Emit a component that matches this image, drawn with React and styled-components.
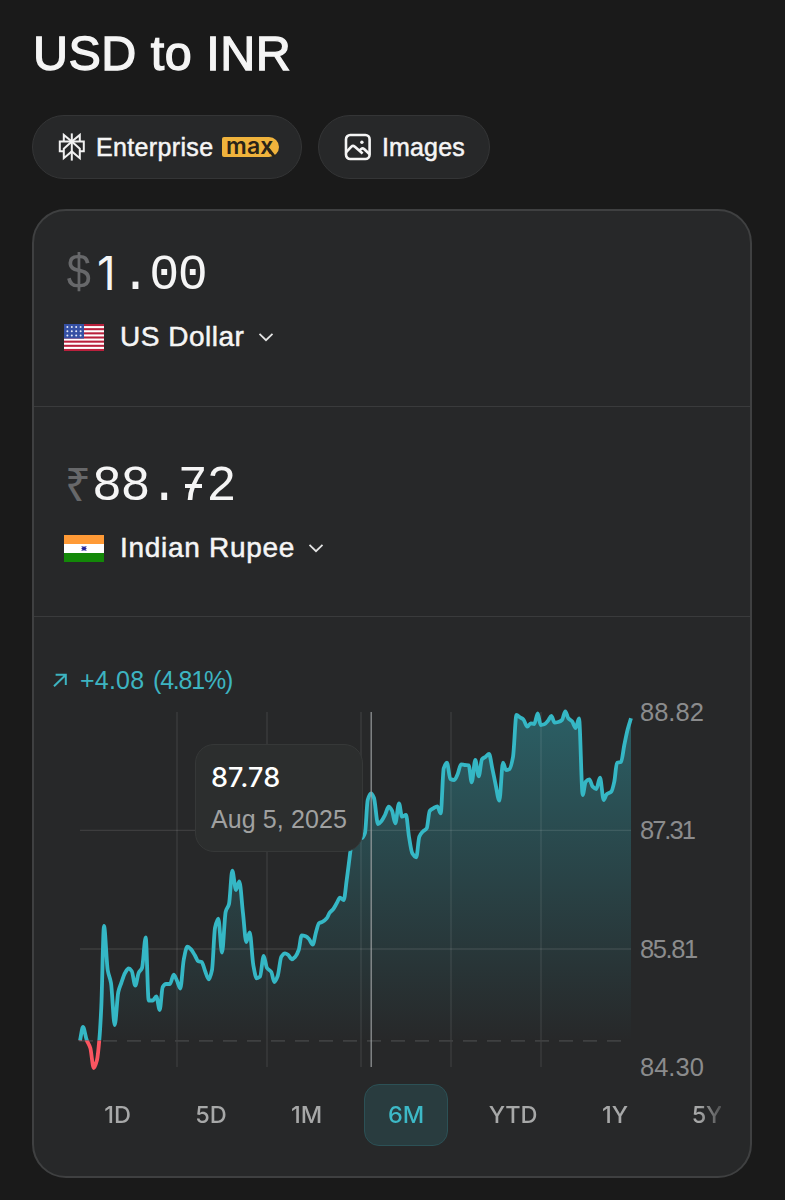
import React from 'react';
import styled, { createGlobalStyle } from 'styled-components';

const Global = createGlobalStyle`
  * { box-sizing: border-box; }
  body { margin: 0; background: #1a1a1a; }
`;

const Page = styled.main`
  height: 1200px;
  padding: 22px 33px 0 32px;
  overflow: hidden;
  background: #1a1a1a;
  color: #f5f5f5;
  font-family: Inter, "Liberation Sans", sans-serif;
`;
const Title = styled.h1`
  margin: 0 0 31px 1px;
  height: 62px;
  line-height: 62px;
  font-family: "Liberation Sans", sans-serif;
  font-size: 48.5px;
  font-weight: 400;
  letter-spacing: 0.5px;
  -webkit-text-stroke: 1.3px #f5f5f5;
  white-space: nowrap;
`;
const Chips = styled.div`
  display: flex;
  gap: 16px;
  margin-bottom: 30px;
`;
const Chip = styled.div`
  display: flex;
  align-items: center;
  width: ${(p) => p.$w}px;
  height: 64px;
  padding-left: 25px;
  border: 1.5px solid #343536;
  border-radius: 32px;
  background: #272829;
  font-size: 24px;
  font-weight: 500;
  white-space: nowrap;
  svg { flex: none; }
`;
const ChipLabel = styled.span`
  width: ${(p) => p.$w}px;
  margin-left: 10px;
  font-family: "Liberation Sans", sans-serif;
  font-size: 25px;
  line-height: 28px;
  padding-bottom: 1px;
  font-weight: 400;
  letter-spacing: ${(p) => p.$ls}px;
  -webkit-text-stroke: 0.5px #f5f5f5;
`;
const MaxBadge = styled.span`
  position: relative;
  width: 57px;
  height: 20px;
  margin-left: 8px;
  padding-left: 4px;
  border-radius: 2px 10px 10px 2px;
  background: #f0b33c;
  color: #2a2418;
  font-size: 23px;
  line-height: 18px;
  font-weight: 600;
  letter-spacing: 0.2px;
  &::after {
    content: '';
    position: absolute;
    left: 48px;
    top: 11px;
    width: 2.6px;
    height: 10px;
    background: #2a2418;
    transform: rotate(-38deg);
  }
`;

const Card = styled.section`
  height: 969px;
  border: 2px solid #3f4041;
  border-radius: 34px;
  background: #272829;
`;
const CurrencyPanel = styled.div`
  height: ${(p) => p.$h}px;
  padding: ${(p) => p.$top}px 30px 0;
  border-bottom: 1px solid #3a3b3c;
`;
const Amount = styled.div`
  display: flex;
  height: 52px;
  line-height: 52px;
  font-family: "Liberation Mono", monospace;
  font-size: 50px;
  white-space: nowrap;
`;
const Sign = styled.span`
  width: 28px;
  margin-top: ${(p) => (p.$sans ? -1 : 2)}px;
  color: #67686a;
  text-align: center;
  font-family: ${(p) => (p.$sans ? '"Noto Sans", sans-serif' : 'inherit')};
  font-size: ${(p) => (p.$sans ? 46 : 50)}px;
  transform: scaleX(${(p) => (p.$sans ? 1 : 0.87)});
`;
const Digit = styled.span`
  position: relative;
  width: 28.6px;
  margin-top: ${(p) => (p.$c === '1' ? 0 : 3)}px;
  text-align: center;
  font-family: ${(p) => (p.$c === '1' ? 'Inter, sans-serif' : 'inherit')};
  font-size: ${(p) => (p.$c === '1' ? 46 : 50)}px;
  &::after {
    content: '';
    display: ${(p) => (p.$c === '7' ? 'block' : 'none')};
    position: absolute;
    left: 7px;
    top: 23px;
    width: 17px;
    height: 3.5px;
    background: #f5f5f5;
  }
`;
const Picker = styled.div`
  display: flex;
  align-items: center;
  height: 28px;
  margin-top: 24px;
  font-family: "Liberation Sans", sans-serif;
  font-size: 28px;
  white-space: nowrap;
`;
const PickerName = styled.span`
  width: ${(p) => p.$w}px;
  margin: 0 13px 0 16px;
  letter-spacing: ${(p) => p.$ls}px;
  -webkit-text-stroke: 0.5px #f5f5f5;
`;

const Market = styled.div`
  padding: 48px 0 0 46px;
`;
const Change = styled.div`
  display: flex;
  align-items: center;
  height: 30px;
  margin: 0 0 17px -28px;
  color: #3db4c1;
  font-family: "Liberation Sans", sans-serif;
  font-size: 25px;
  white-space: nowrap;
`;
const ChangeValue = styled.span`
  width: 65px;
  margin-left: 12px;
  letter-spacing: 0.2px;
`;
const ChangePercent = styled.span`
  margin-left: 8px;
  letter-spacing: -1.2px;
`;
const ChartRow = styled.div`
  position: relative;
  display: flex;
  height: 355px;
  svg { flex: none; overflow: visible; }
`;
const Scale = styled.div`
  display: flex;
  flex-direction: column;
  justify-content: space-between;
  margin-left: 9px;
  color: #8b8c8d;
  font-family: "Liberation Sans", sans-serif;
  font-size: 25.5px;
`;
const ScaleLabel = styled.span`
  height: 0;
  line-height: 0;
  letter-spacing: ${(p) => p.$ls}px;
`;
const Tooltip = styled.div`
  position: absolute;
  left: 115px;
  top: 32px;
  width: 168px;
  height: 108px;
  padding: 16px 0 0 15px;
  border: 1.5px solid #363838;
  border-radius: 19px;
  background: #2c2e2e;
  white-space: nowrap;
`;
const TipValue = styled.div`
  height: 34px;
  line-height: 34px;
  color: #fff;
  font-size: 27px;
  font-weight: 500;
  letter-spacing: 0.1px;
`;
const TipDate = styled.div`
  margin-top: 7px;
  height: 34px;
  line-height: 34px;
  color: #a0a1a1;
  font-family: "Liberation Sans", sans-serif;
  font-size: 25px;
  letter-spacing: 0.1px;
`;
const Tabs = styled.div`
  display: flex;
  gap: 19px;
  width: 640px;
  margin: 17px 0 0 1px;
  overflow: hidden;
  mask-image: linear-gradient(to right, #000 618px, transparent 650px);
`;
const Tab = styled.button`
  flex: none;
  width: ${(p) => p.$w}px;
  height: 62px;
  padding: 0 0 2px;
  border: 1.5px solid ${(p) => (p.$on ? '#2c5156' : 'transparent')};
  border-radius: 15px;
  background: ${(p) => (p.$on ? '#293c3f' : 'transparent')};
  color: ${(p) => (p.$on ? '#3db9c7' : '#a7a8a8')};
  font-family: inherit;
  font-size: 23.5px;
  font-weight: 500;
  letter-spacing: -0.1px;
`;

const POINTS = [
  [80, 1040.7], [83, 1027], [86.7, 1040], [90.3, 1048], [93.7, 1068], [97, 1060], [99.3, 1040], [101.3, 1007],
  [104, 926], [107.7, 970], [111, 983], [114.7, 1025], [118.3, 992], [121.3, 983], [125, 973], [128.7, 968.5],
  [131.7, 971], [135.3, 985.7], [138.7, 972.7], [142, 968], [145.7, 937.5], [148.7, 1000.5], [152.7, 1000.5],
  [156.3, 996.5], [159.7, 1010], [162.7, 987], [166, 984], [170, 984], [173.7, 974.7], [176.7, 980], [180.3, 988.5],
  [183.7, 960], [187.3, 946.7], [190.7, 949], [194.7, 955], [198.3, 961.3], [201.7, 962], [205, 970.7],
  [208.7, 979.3], [212, 970], [215, 928], [218.3, 918.7], [222, 952.7], [225.7, 911.7], [229, 904], [232.3, 870.7],
  [236, 890], [239.3, 881.3], [243, 913.3], [246.3, 942], [249.7, 932.3], [253.3, 965], [256.7, 978.3],
  [260, 976.7], [263.7, 956], [267, 968], [271.3, 972], [274.3, 982], [277.7, 976], [281.3, 956.7], [285, 953.3],
  [288.3, 955], [291.7, 959.3], [295.3, 956.7], [298.7, 950], [301.7, 935.3], [305.7, 936.3], [309, 939],
  [312.7, 944.7], [316, 932.3], [319, 923.3], [322.7, 921.7], [326.7, 918.3], [329.7, 912.7], [333.3, 909],
  [336.7, 903.3], [340, 897.7], [343.7, 900], [346.7, 880], [350.3, 851.7], [354, 820], [357.5, 808], [362, 838],
  [365, 833], [367.7, 800], [371, 793.3], [374, 798], [378, 824], [381.7, 820.7], [385, 815], [388.7, 806.7],
  [392, 810.7], [395.3, 823.3], [399, 803.3], [402, 816.7], [406, 815], [409, 836.7], [412.3, 853.3],
  [416.3, 857.3], [419.3, 836.7], [422.7, 831.7], [426.7, 828.3], [429.7, 811], [433.3, 808.3], [437.3, 806.3],
  [440.7, 813.3], [443.7, 768.3], [447, 762.7], [450.3, 779], [454.3, 780], [457.7, 774], [461, 764.3],
  [464.7, 765], [468.7, 765.3], [471.7, 782.3], [475.3, 760], [478.7, 776.3], [482, 759.3], [485.7, 756.7],
  [489, 754], [492.3, 768.3], [495.7, 785], [499.3, 800.7], [503, 762.7], [506, 770], [509.3, 769.3],
  [513, 757], [516.5, 715], [520, 717.3], [523.3, 719.3], [527.3, 726.7], [530.7, 723.3], [534.3, 724],
  [537.7, 713.3], [540.7, 725], [544.3, 724.3], [548, 720.7], [551.3, 716], [554.7, 722.7], [558.3, 722],
  [562, 720], [565.3, 711.3], [568.3, 718.3], [572, 721.3], [575.7, 728], [579, 718.3], [582.7, 795],
  [585.7, 781.7], [589.3, 779.3], [592.7, 786.7], [596.3, 789], [600, 777.7], [603.7, 800], [606.7, 794.3],
  [611.3, 791.7], [614.3, 781.7], [617, 762.7], [621, 762], [624.3, 745], [627.7, 729.3], [631, 718.3],
];

// Monotone cubic interpolation: smooth between samples, no overshoot at the peaks.
function smoothPath(pts) {
  const slope = (i) => (pts[i + 1][1] - pts[i][1]) / (pts[i + 1][0] - pts[i][0]);
  const tangents = pts.map((_, i) => {
    if (i === 0) return slope(0);
    if (i === pts.length - 1) return slope(i - 1);
    const a = slope(i - 1);
    const b = slope(i);
    return a * b <= 0 ? 0 : (2 * a * b) / (a + b);
  });
  let d = `M${pts[0][0]} ${pts[0][1]}`;
  for (let i = 0; i < pts.length - 1; i += 1) {
    const [x0, y0] = pts[i];
    const [x1, y1] = pts[i + 1];
    const h = (x1 - x0) / 3;
    d += `C${x0 + h} ${y0 + tangents[i] * h} ${x1 - h} ${y1 - tangents[i + 1] * h} ${x1} ${y1}`;
  }
  return d;
}

const LINE = smoothPath(POINTS);

function Chart() {
  return (
    <svg width="551" height="355" viewBox="80 712 551 355">
      <defs>
        <linearGradient id="fill" gradientUnits="userSpaceOnUse" x1="0" y1="712" x2="0" y2="1041">
          <stop offset="0" stopColor="#32b8c6" stopOpacity="0.38" />
          <stop offset="1" stopColor="#32b8c6" stopOpacity="0" />
        </linearGradient>
        <clipPath id="above"><rect x="70" y="700" width="570" height="340.5" /></clipPath>
        <clipPath id="below"><rect x="70" y="1040.5" width="570" height="40" /></clipPath>
      </defs>
      <path d={`${LINE}V1041H80Z`} fill="url(#fill)" clipPath="url(#above)" />
      <g stroke="#fff" strokeOpacity="0.1" strokeWidth="1.3">
        {[177, 267, 361, 451, 541].map((x) => <path key={x} d={`M${x} 712V1067`} />)}
        {[830.3, 949].map((y) => <path key={y} d={`M80 ${y}H631`} />)}
      </g>
      <path d="M79 1040.8H631" stroke="#3f4041" strokeWidth="1.7" strokeDasharray="14 10" />
      <g fill="none" strokeWidth="3.8" strokeLinejoin="round">
        <path d={LINE} stroke="#35b7c5" clipPath="url(#above)" />
        <path d={LINE} stroke="#fb5560" clipPath="url(#below)" />
      </g>
      <path d="M371.2 712V1067" stroke="#a0a5a6" strokeOpacity="0.85" strokeWidth="1.3" />
    </svg>
  );
}

const PerplexityIcon = () => (
  <svg width="28" height="28" viewBox="0 0 28 28" fill="none" stroke="#f0f0f0" strokeWidth="2">
    <path d="M13.8 0.4V27.6" />
    <path d="M13.8 8.6 5.8 1.9V8.4M13.8 8.6 21.8 1.9V8.4" />
    <path d="M5.8 18.2H1.8V8.4H25.8V18.2H21.8" />
    <path d="M13.8 8.6 5.8 15.8V25.2L13.8 18.4 21.8 25.2V15.8L13.8 8.6" />
  </svg>
);
const ImageIcon = () => (
  <svg width="28" height="28" viewBox="0 0 28 28" fill="none" stroke="#f5f5f5" strokeWidth="2.6" strokeLinejoin="round">
    <rect x="2" y="2" width="23.6" height="24" rx="4.2" />
    <path d="M2.2 19.2 7.4 13.6Q9 12 10.6 13.6L18.6 20.6M15.2 17.9 17.2 16Q18.6 14.8 20.1 16L25.4 21" />
    <circle cx="17.9" cy="9.2" r="1.7" fill="#f5f5f5" stroke="none" />
  </svg>
);
const Chevron = () => (
  <svg width="16" height="10" viewBox="0 0 16 10" fill="none" stroke="#e4e4e4" strokeWidth="1.8">
    <path d="M1.5 1.8 8 8.2 14.5 1.8" />
  </svg>
);
const ArrowUpRight = () => (
  <svg width="16" height="16" viewBox="0 0 16 16" fill="none" stroke="currentColor" strokeWidth="2">
    <path d="M2 14.2 13.6 3M3.6 2.8H13.8V13" />
  </svg>
);
const UsFlag = () => (
  <svg width="40" height="27" viewBox="0 0 40 27">
    <rect width="40" height="27" fill="#fff" />
    {[0, 1, 2, 3, 4, 5, 6].map((i) => <rect key={i} y={i * 4.154} width="40" height="2.077" fill="#b9203c" />)}
    <rect width="20" height="14.54" fill="#3550a4" />
    {[3, 7.3, 11.6].map((y) => [3.4, 7.8, 12.2, 16.6].map((x) => (
      <circle key={`${x}-${y}`} cx={x} cy={y} r="1" fill="#e6ebf7" />
    )))}
  </svg>
);
const IndiaFlag = () => (
  <svg width="40" height="27" viewBox="0 0 40 27">
    <rect width="40" height="27" fill="#fff" />
    <rect width="40" height="9" fill="#ff9a36" />
    <rect y="18" width="40" height="9" fill="#138808" />
    <path d="M17.7 11.4 22.3 15.6M22.3 11.4 17.7 15.6M20 11.2V15.8M17.5 13.5H22.5" stroke="#25259a" strokeWidth="1.1" />
  </svg>
);

const digits = (s) => s.split('').map((c, i) => <Digit key={i} $c={c}>{c}</Digit>);

const RANGES = [['1D', 73], ['5D', 76], ['1M', 77], ['6M', 84], ['YTD', 92], ['1Y', 74], ['5Y', 72]];

export default function App() {
  return (
    <Page>
      <Global />
      <Title>USD to INR</Title>
      <Chips>
        <Chip $w={270}>
          <PerplexityIcon />
          <ChipLabel $w={118} $ls={0.35}>Enterprise</ChipLabel>
          <MaxBadge>max</MaxBadge>
        </Chip>
        <Chip $w={172}>
          <ImageIcon />
          <ChipLabel $w={84} $ls={0.15}>Images</ChipLabel>
        </Chip>
      </Chips>
      <Card>
        <CurrencyPanel $h={196} $top={36}>
          <Amount><Sign>$</Sign>{digits('1.00')}</Amount>
          <Picker><UsFlag /><PickerName $w={125} $ls={0.5}>US Dollar</PickerName><Chevron /></Picker>
        </CurrencyPanel>
        <CurrencyPanel $h={210} $top={51}>
          <Amount><Sign $sans>₹</Sign>{digits('88.72')}</Amount>
          <Picker><IndiaFlag /><PickerName $w={175} $ls={0.7}>Indian Rupee</PickerName><Chevron /></Picker>
        </CurrencyPanel>
        <Market>
          <Change><ArrowUpRight /><ChangeValue>+4.08</ChangeValue><ChangePercent>(4.81%)</ChangePercent></Change>
          <ChartRow>
            <Chart />
            <Scale>
              <ScaleLabel $ls={0}>88.82</ScaleLabel>
              <ScaleLabel $ls={-2}>87.31</ScaleLabel>
              <ScaleLabel $ls={-1.4}>85.81</ScaleLabel>
              <ScaleLabel $ls={0}>84.30</ScaleLabel>
            </Scale>
            <Tooltip>
              <TipValue>87.78</TipValue>
              <TipDate>Aug 5, 2025</TipDate>
            </Tooltip>
          </ChartRow>
          <Tabs>
            {RANGES.map(([label, w]) => <Tab key={label} $w={w} $on={label === '6M'}>{label}</Tab>)}
          </Tabs>
        </Market>
      </Card>
    </Page>
  );
}
